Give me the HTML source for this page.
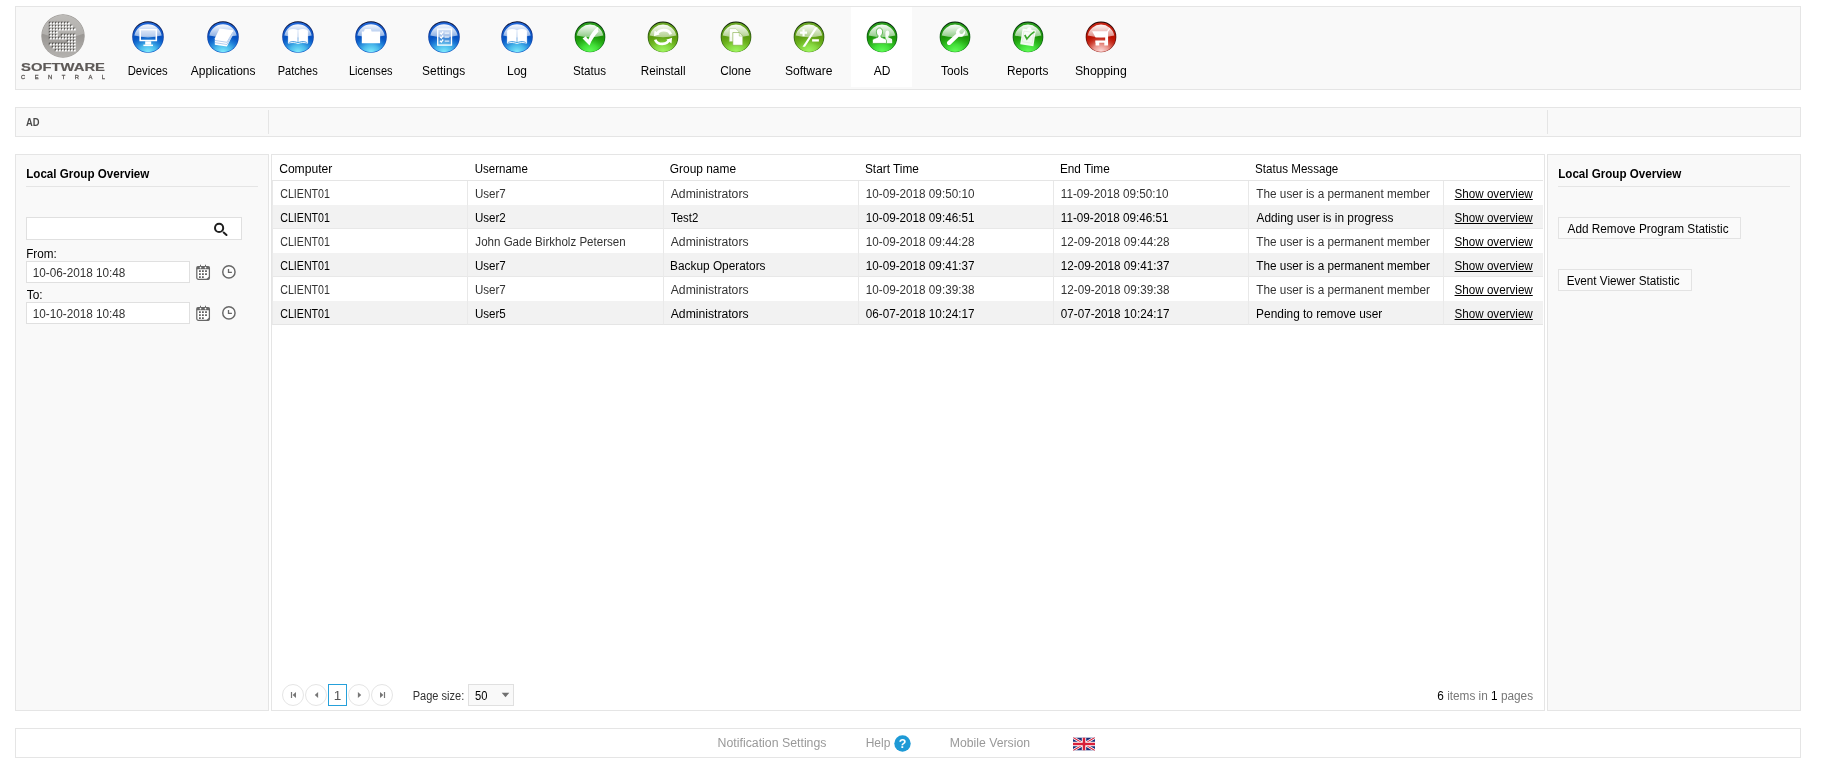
<!DOCTYPE html>
<html lang="en">
<head>
<meta charset="utf-8">
<title>SoftwareCentral - AD - Local Group Overview</title>
<style>
*{box-sizing:border-box;margin:0;padding:0}
html,body{width:1837px;height:779px;background:#fff;overflow:hidden}
body{will-change:transform;font-family:"Liberation Sans",Arial,sans-serif;font-size:12px;color:#000;position:relative}
.box{position:absolute;left:15px;width:1786px;border:1px solid #e5e5e5;background:#f9f9f9}
#hdr{top:6px;height:84px}
#crumb{top:107px;height:30px}
#foot{top:728px;height:30px;background:#fff}
.panel{position:absolute;top:154px;height:557px;width:254px;border:1px solid #e5e5e5;background:#f9f9f9}
#lp{left:15px}
#rp{left:1547px}
#grid{position:absolute;left:271px;top:154px;width:1274px;height:557px;border:1px solid #e5e5e5;background:#fff}
.abs{position:absolute;white-space:nowrap}
.fx{display:inline-block;transform-origin:0 50%;white-space:nowrap}
.h_comp{transform:translateX(0.13px) scaleX(1.0100)}
.h_user{transform:translateX(0.70px) scaleX(0.9590)}
.h_group{transform:translateX(-0.14px) scaleX(0.9917)}
.h_start{transform:translateX(-0.04px) scaleX(0.9849)}
.h_end{transform:translateX(-0.09px) scaleX(0.9835)}
.h_status{transform:translateX(0.08px) scaleX(0.9673)}
.c_client{transform:translateX(0.21px) scaleX(0.8875)}
.c_user{transform:translateX(-0.09px) scaleX(0.9649)}
.c_john{transform:translateX(0.36px) scaleX(0.9629)}
.c_admin{transform:translateX(-0.26px) scaleX(1.0144)}
.c_test2{transform:translateX(0.04px) scaleX(0.9516)}
.c_backup{transform:translateX(-0.91px) scaleX(0.9868)}
.c_date{transform:translateX(-0.23px) scaleX(0.9749)}
.c_perm{transform:translateX(0.34px) scaleX(0.9789)}
.c_adding{transform:translateX(0.49px) scaleX(0.9865)}
.c_pending{transform:translateX(0.12px) scaleX(0.9906)}
.c_show{transform:translateX(0.56px) scaleX(0.9690)}
#n_Devices{transform:translateX(1.66px) scaleX(0.9391)}
#n_Applications{transform:translateX(0.76px) scaleX(1.0004)}
#n_Patches{transform:translateX(1.71px) scaleX(0.9230)}
#n_Licenses{transform:translateX(1.96px) scaleX(0.9201)}
#n_Settings{transform:translateX(0.10px) scaleX(0.9933)}
#n_Log{transform:translateX(1.01px) scaleX(0.9969)}
#n_Status{transform:translateX(1.00px) scaleX(0.9686)}
#n_Reinstall{transform:translateX(1.71px) scaleX(0.9728)}
#n_Clone{transform:translateX(0.15px) scaleX(0.9837)}
#n_Software{transform:translateX(-0.09px) scaleX(1.0055)}
#n_AD{transform:translateX(0.83px) scaleX(1.0013)}
#n_Tools{transform:translateX(0.99px) scaleX(0.9897)}
#n_Reports{transform:translateX(0.88px) scaleX(0.9864)}
#n_Shopping{transform:translateX(-0.10px) scaleX(1.0220)}
#t_crumb{transform:translateX(-0.08px) scaleX(0.9375)}
.t_title{transform:translateX(0.23px) scaleX(0.9666)}
#t_from{transform:translateX(0.19px) scaleX(0.9738)}
#t_to{transform:translateX(0.82px) scaleX(0.9905)}
.t_dt{transform:translateX(-0.31px) scaleX(0.9784)}
#t_b1{transform:translateX(-0.39px) scaleX(0.9808)}
#t_b2{transform:translateX(-1.32px) scaleX(0.9754)}
#t_f1{transform:translateX(-0.39px) scaleX(1.0265)}
#t_f2{transform:translateX(-0.30px) scaleX(1.0000)}
#t_f3{transform:translateX(-0.24px) scaleX(1.0195)}
#t_pgsz{transform:translateX(-0.31px) scaleX(0.9197)}
#t_pginfo{transform:translateX(1.28px) scaleX(0.9828)}

/* nav */
.nav{position:absolute;top:0;height:80px;width:61px;text-align:center}
.nav.sel{background:#fff}
.nav svg{position:absolute;left:15px;top:14px;width:32px;height:32px}
.nav span b{font-weight:normal}
.nav span{position:absolute;left:-20px;right:-20px;top:57px;line-height:14px;font-size:12px;color:#000;text-align:center;white-space:nowrap}
/* panel */
.ptitle{position:absolute;left:10px;top:12px;font-weight:bold;font-size:12px;line-height:14px;white-space:nowrap}
.pline{position:absolute;left:10px;top:31px;width:232px;height:1px;background:#e5e5e5}
.inp{position:absolute;background:#fff;border:1px solid #e0e0e0;font-size:12px;color:#333;white-space:nowrap}
.btn{position:absolute;border:1px solid #e3e3e3;background:#fafafa;height:22px;line-height:22px;font-size:12px;padding:0 0 0 9px;white-space:nowrap;color:#000}
/* grid */
table{border-collapse:separate;border-spacing:0;table-layout:fixed;width:1271px;position:absolute;left:0;top:0}
th{height:26px;text-align:left;font-weight:normal;font-size:12px;padding:2px 0 0 7px;border-bottom:1px solid #e5e5e5;color:#000;white-space:nowrap}
td{height:24px;font-size:12px;padding:2px 0 0 7px;border-left:1px solid #e8e8e8;color:#333;white-space:nowrap;overflow:hidden}
tr.alt td{background:#f2f2f2;color:#000;border-left-color:#eaeaea;border-bottom:1px solid #e8e8e8}
tr.last td{border-bottom:1px solid #e5e5e5}
td a{color:#000;text-decoration:underline}
td.lnk{padding-left:10px}
.pg{position:absolute;top:529px;width:22px;height:22px;border:1px solid #e5e5e5;border-radius:11px;background:#fff}
.pg svg{position:absolute;left:0;top:0;width:20px;height:20px}
.fl{position:absolute;top:7px;line-height:14px;font-size:12px;color:#999;white-space:nowrap}
</style>
</head>
<body>
<svg width="0" height="0" style="position:absolute;left:0;top:0" aria-hidden="true">
<defs>
  <linearGradient id="gloss" x1="0" y1="0" x2="0" y2="1"><stop offset="0" stop-color="#fff" stop-opacity=".97"/><stop offset="1" stop-color="#fff" stop-opacity=".5"/></linearGradient>
  <!-- blue -->
  <linearGradient id="rB" x1="0" y1="0" x2="0" y2="1"><stop offset="0" stop-color="#050a2a"/><stop offset=".4" stop-color="#143a98"/><stop offset="1" stop-color="#1560cc"/></linearGradient>
  <linearGradient id="bB" x1="0" y1="0" x2="0" y2="1"><stop offset="0" stop-color="#2468d8"/><stop offset=".5" stop-color="#0652c2"/><stop offset=".7" stop-color="#0c62cc"/><stop offset="1" stop-color="#2a9ae4"/></linearGradient>
  <radialGradient id="gB" cx=".5" cy="1.02" r=".62"><stop offset="0" stop-color="#86f0ff"/><stop offset=".45" stop-color="#55c8f0" stop-opacity=".8"/><stop offset="1" stop-color="#2a90e0" stop-opacity="0"/></radialGradient>
  <!-- bright green -->
  <linearGradient id="rG" x1="0" y1="0" x2="0" y2="1"><stop offset="0" stop-color="#03200a"/><stop offset=".45" stop-color="#0c5a14"/><stop offset="1" stop-color="#147a18"/></linearGradient>
  <linearGradient id="bG" x1="0" y1="0" x2="0" y2="1"><stop offset="0" stop-color="#2ea022"/><stop offset=".5" stop-color="#1a9406"/><stop offset=".7" stop-color="#22a610"/><stop offset="1" stop-color="#38d430"/></linearGradient>
  <radialGradient id="gG" cx=".5" cy="1.02" r=".62"><stop offset="0" stop-color="#66ff5c"/><stop offset=".45" stop-color="#48e840" stop-opacity=".8"/><stop offset="1" stop-color="#2ab41e" stop-opacity="0"/></radialGradient>
  <!-- olive green -->
  <linearGradient id="rO" x1="0" y1="0" x2="0" y2="1"><stop offset="0" stop-color="#0c1c06"/><stop offset=".45" stop-color="#2c5a10"/><stop offset="1" stop-color="#3f7c14"/></linearGradient>
  <linearGradient id="bO" x1="0" y1="0" x2="0" y2="1"><stop offset="0" stop-color="#6aa828"/><stop offset=".5" stop-color="#5c9c10"/><stop offset=".72" stop-color="#68ac18"/><stop offset="1" stop-color="#88dc40"/></linearGradient>
  <radialGradient id="gO" cx=".5" cy="1.02" r=".62"><stop offset="0" stop-color="#a4f866"/><stop offset=".45" stop-color="#8ce048" stop-opacity=".8"/><stop offset="1" stop-color="#6cb020" stop-opacity="0"/></radialGradient>
  <!-- red -->
  <linearGradient id="rR" x1="0" y1="0" x2="0" y2="1"><stop offset="0" stop-color="#1c0403"/><stop offset=".45" stop-color="#5a0e0a"/><stop offset="1" stop-color="#8c2018"/></linearGradient>
  <linearGradient id="bR" x1="0" y1="0" x2="0" y2="1"><stop offset="0" stop-color="#c82818"/><stop offset=".5" stop-color="#bc1000"/><stop offset=".7" stop-color="#c22010"/><stop offset="1" stop-color="#d85a50"/></linearGradient>
  <radialGradient id="gR" cx=".5" cy="1.02" r=".62"><stop offset="0" stop-color="#ffe4e4"/><stop offset=".45" stop-color="#f0a8a0" stop-opacity=".8"/><stop offset="1" stop-color="#c83020" stop-opacity="0"/></radialGradient>
  <g id="ballB"><circle cx="16" cy="16" r="15.8" fill="url(#rB)"/><circle cx="16" cy="16.2" r="15" fill="url(#bB)"/><circle cx="16" cy="16.2" r="15" fill="url(#gB)"/><path d="M2.3 14.6A13.9 13.7 0 0 1 29.7 14.6Q16 18.200 2.300 14.600Z" fill="url(#gloss)"/></g>
  <g id="ballG"><circle cx="16" cy="16" r="15.8" fill="url(#rG)"/><circle cx="16" cy="16.2" r="15" fill="url(#bG)"/><circle cx="16" cy="16.2" r="15" fill="url(#gG)"/><path d="M2.3 14.6A13.9 13.7 0 0 1 29.7 14.6Q16 18.200 2.300 14.600Z" fill="url(#gloss)"/></g>
  <g id="ballO"><circle cx="16" cy="16" r="15.8" fill="url(#rO)"/><circle cx="16" cy="16.2" r="15" fill="url(#bO)"/><circle cx="16" cy="16.2" r="15" fill="url(#gO)"/><path d="M2.3 14.6A13.9 13.7 0 0 1 29.7 14.6Q16 18.200 2.300 14.600Z" fill="url(#gloss)"/></g>
  <g id="ballR"><circle cx="16" cy="16" r="15.8" fill="url(#rR)"/><circle cx="16" cy="16.2" r="15" fill="url(#bR)"/><circle cx="16" cy="16.2" r="15" fill="url(#gR)"/><path d="M2.3 14.6A13.9 13.7 0 0 1 29.7 14.6Q16 18.200 2.300 14.600Z" fill="url(#gloss)"/></g>
</defs>
</svg>

<div id="hdr" class="box">
<svg class="abs" style="left:0;top:0" width="110" height="82" viewBox="0 0 110 82">
<defs>
<linearGradient id="lgA" x1="0" y1="0" x2="0" y2="1"><stop offset="0" stop-color="#d6d5d3"/><stop offset=".25" stop-color="#bdbbb8"/><stop offset="1" stop-color="#aeaca9"/></linearGradient>
<linearGradient id="lgB" x1="0" y1="0" x2="0" y2="1"><stop offset="0" stop-color="#8e8b88"/><stop offset=".45" stop-color="#999693"/><stop offset="1" stop-color="#b4b2af"/></linearGradient>
<clipPath id="lgC"><circle cx="47" cy="29" r="21.2"/></clipPath>
</defs>
<circle cx="47" cy="29" r="21.700" fill="#a19e9b"/>
<circle cx="47" cy="29" r="21.200" fill="url(#lgB)"/>
<path clip-path="url(#lgC)" d="M20 0h54v24.600L47 33.500 20 24.600z" fill="url(#lgA)"/>
<path d="M32.85 14.65h2.5l-2.5 2.5zM35.85 14.65h2.5l-2.5 2.5zM38.85 14.65h2.5l-2.5 2.5zM41.85 14.65h2.5l-2.5 2.5zM44.85 14.65h2.5l-2.5 2.5zM47.85 14.65h2.5l-2.5 2.5zM50.85 14.65h2.5l-2.5 2.5zM32.85 17.65h2.5l-2.5 2.5zM35.85 17.65h2.5l-2.5 2.5zM38.85 17.65h2.5l-2.5 2.5zM41.85 17.65h2.5l-2.5 2.5zM44.85 17.65h2.5l-2.5 2.5zM47.85 17.65h2.5l-2.5 2.5zM50.85 17.65h2.5l-2.5 2.5zM53.85 17.65h2.5l-2.5 2.5zM32.85 20.65h2.5l-2.5 2.5zM35.85 20.65h2.5l-2.5 2.5zM38.85 20.65h2.5l-2.5 2.5zM41.85 20.65h2.5l-2.5 2.5zM44.85 20.65h2.5l-2.5 2.5zM47.85 20.65h2.5l-2.5 2.5zM50.85 20.65h2.5l-2.5 2.5zM53.85 20.65h2.5l-2.5 2.5zM56.85 20.65h2.5l-2.5 2.5zM32.85 23.65h2.5l-2.5 2.5zM35.85 23.65h2.5l-2.5 2.5zM38.85 23.65h2.5l-2.5 2.5zM32.85 26.65h2.5l-2.5 2.5zM35.85 26.65h2.5l-2.5 2.5zM38.85 26.65h2.5l-2.5 2.5zM44.85 26.65h2.5l-2.5 2.5zM47.85 26.65h2.5l-2.5 2.5zM50.85 26.65h2.5l-2.5 2.5zM53.85 26.65h2.5l-2.5 2.5zM56.85 26.65h2.5l-2.5 2.5zM32.85 29.65h2.5l-2.5 2.5zM35.85 29.65h2.5l-2.5 2.5zM38.85 29.65h2.5l-2.5 2.5zM41.85 29.65h2.5l-2.5 2.5zM44.85 29.65h2.5l-2.5 2.5zM47.85 29.65h2.5l-2.5 2.5zM50.85 29.65h2.5l-2.5 2.5zM53.85 29.65h2.5l-2.5 2.5zM56.85 29.65h2.5l-2.5 2.5zM50.85 32.65h2.5l-2.5 2.5zM53.85 32.65h2.5l-2.5 2.5zM56.85 32.65h2.5l-2.5 2.5zM32.85 35.65h2.5l-2.5 2.5zM35.85 35.65h2.5l-2.5 2.5zM38.85 35.65h2.5l-2.5 2.5zM41.85 35.65h2.5l-2.5 2.5zM44.85 35.65h2.5l-2.5 2.5zM47.85 35.65h2.5l-2.5 2.5zM50.85 35.65h2.5l-2.5 2.5zM53.85 35.65h2.5l-2.5 2.5zM56.85 35.65h2.5l-2.5 2.5zM35.85 38.65h2.5l-2.5 2.5zM38.85 38.65h2.5l-2.5 2.5zM41.85 38.65h2.5l-2.5 2.5zM44.85 38.65h2.5l-2.5 2.5zM47.85 38.65h2.5l-2.5 2.5zM50.85 38.65h2.5l-2.5 2.5zM53.85 38.65h2.5l-2.5 2.5zM56.85 38.65h2.5l-2.5 2.5zM38.85 41.65h2.5l-2.5 2.5zM41.85 41.65h2.5l-2.5 2.5zM44.85 41.65h2.5l-2.5 2.5zM47.85 41.65h2.5l-2.5 2.5zM50.85 41.65h2.5l-2.5 2.5zM53.85 41.65h2.5l-2.5 2.5zM56.85 41.65h2.5l-2.5 2.5z" fill="#1e1c1a" fill-opacity=".85"/>
<path d="M33.65 15.45h2.1v2.1h-2.1zM36.65 15.45h2.1v2.1h-2.1zM39.65 15.45h2.1v2.1h-2.1zM42.65 15.45h2.1v2.1h-2.1zM45.65 15.45h2.1v2.1h-2.1zM48.65 15.45h2.1v2.1h-2.1zM51.65 15.45h2.1v2.1h-2.1zM33.65 18.45h2.1v2.1h-2.1zM36.65 18.45h2.1v2.1h-2.1zM39.65 18.45h2.1v2.1h-2.1zM42.65 18.45h2.1v2.1h-2.1zM45.65 18.45h2.1v2.1h-2.1zM48.65 18.45h2.1v2.1h-2.1zM51.65 18.45h2.1v2.1h-2.1zM54.65 18.45h2.1v2.1h-2.1zM33.65 21.45h2.1v2.1h-2.1zM36.65 21.45h2.1v2.1h-2.1zM39.65 21.45h2.1v2.1h-2.1zM42.65 21.45h2.1v2.1h-2.1zM45.65 21.45h2.1v2.1h-2.1zM48.65 21.45h2.1v2.1h-2.1zM51.65 21.45h2.1v2.1h-2.1zM54.65 21.45h2.1v2.1h-2.1zM57.65 21.45h2.1v2.1h-2.1zM33.65 24.45h2.1v2.1h-2.1zM36.65 24.45h2.1v2.1h-2.1zM39.65 24.45h2.1v2.1h-2.1zM33.65 27.45h2.1v2.1h-2.1zM36.65 27.45h2.1v2.1h-2.1zM39.65 27.45h2.1v2.1h-2.1zM45.65 27.45h2.1v2.1h-2.1zM48.65 27.45h2.1v2.1h-2.1zM51.65 27.45h2.1v2.1h-2.1zM54.65 27.45h2.1v2.1h-2.1zM57.65 27.45h2.1v2.1h-2.1zM33.65 30.45h2.1v2.1h-2.1zM36.65 30.45h2.1v2.1h-2.1zM39.65 30.45h2.1v2.1h-2.1zM42.65 30.45h2.1v2.1h-2.1zM45.65 30.45h2.1v2.1h-2.1zM48.65 30.45h2.1v2.1h-2.1zM51.65 30.45h2.1v2.1h-2.1zM54.65 30.45h2.1v2.1h-2.1zM57.65 30.45h2.1v2.1h-2.1zM51.65 33.45h2.1v2.1h-2.1zM54.65 33.45h2.1v2.1h-2.1zM57.65 33.45h2.1v2.1h-2.1zM33.65 36.45h2.1v2.1h-2.1zM36.65 36.45h2.1v2.1h-2.1zM39.65 36.45h2.1v2.1h-2.1zM42.65 36.45h2.1v2.1h-2.1zM45.65 36.45h2.1v2.1h-2.1zM48.65 36.45h2.1v2.1h-2.1zM51.65 36.45h2.1v2.1h-2.1zM54.65 36.45h2.1v2.1h-2.1zM57.65 36.45h2.1v2.1h-2.1zM36.65 39.45h2.1v2.1h-2.1zM39.65 39.45h2.1v2.1h-2.1zM42.65 39.45h2.1v2.1h-2.1zM45.65 39.45h2.1v2.1h-2.1zM48.65 39.45h2.1v2.1h-2.1zM51.65 39.45h2.1v2.1h-2.1zM54.65 39.45h2.1v2.1h-2.1zM57.65 39.45h2.1v2.1h-2.1zM39.65 42.45h2.1v2.1h-2.1zM42.65 42.45h2.1v2.1h-2.1zM45.65 42.45h2.1v2.1h-2.1zM48.65 42.45h2.1v2.1h-2.1zM51.65 42.45h2.1v2.1h-2.1zM54.65 42.45h2.1v2.1h-2.1zM57.65 42.45h2.1v2.1h-2.1z" fill="#fff"/>
<text x="5" y="63.800" font-family="Liberation Sans,Arial,sans-serif" font-weight="bold" font-size="10.200" fill="#5e5a58" stroke="#5e5a58" stroke-width=".15" textLength="84" lengthAdjust="spacingAndGlyphs">SOFTWARE</text>
<text x="5" y="71.900" font-family="Liberation Sans,Arial,sans-serif" font-weight="normal" font-size="5.800" fill="#5e5a58" stroke="#5e5a58" stroke-width=".3" textLength="84" lengthAdjust="spacing" id="lgT2">CENTRAL</text>
</svg>

<div class="nav" style="left:101px"><svg viewBox="0 0 32 32"><use href="#ballB"/><path fill="#fff" fill-rule="evenodd" d="M7.4 8h17.7v12.3H7.4zM9 9.6v9.1h14.5V9.6z"/><path fill="#fff" d="M13.2 20.3h6v3.4h-6z"/><path fill="#fff" d="M11.4 23.6h9.6v1.5h-9.6z"/><path fill="#fff" fill-opacity=".35" d="M9 9.6h14.5v6H9z"/></svg><span><b class="fx" id="n_Devices">Devices</b></span></div>
<div class="nav" style="left:176px"><svg viewBox="0 0 32 32"><use href="#ballB"/><path fill="#fff" d="M12.700 7.400l13.400 1.900v4.300l-6.200 12-12.100-1.900v-6.500z"/><path fill="none" stroke="#7aa6e0" stroke-width=".55" d="M7.800 19.400l12.100 1.900 6.200-10.500M7.800 21.600l12.100 1.900 6.200-11.300"/></svg><span><b class="fx" id="n_Applications">Applications</b></span></div>
<div class="nav" style="left:251px"><svg viewBox="0 0 32 32"><use href="#ballB"/><path fill="#fff" d="M6.500 9C9.300 7.700 12.800 7.700 15.700 8.900v12.200c-2.900-1-6.300-1-9.200.1z"/><path fill="#fff" d="M25.500 9C22.700 7.700 19.200 7.700 16.300 8.900v12.200c2.900-1 6.300-1 9.200.1z"/><path fill="none" stroke="#fff" stroke-width=".9" d="M6.400 10v12.200c3.200-1 6.400-.9 9.600.3 3.200-1.200 6.400-1.300 9.600-.3V10"/></svg><span><b class="fx" id="n_Patches">Patches</b></span></div>
<div class="nav" style="left:324px"><svg viewBox="0 0 32 32"><use href="#ballB"/><path fill="#fff" d="M6.800 10.400h2.200l.8-2.400h6l.8 2.400h8.500v11.900H6.800z"/></svg><span><b class="fx" id="n_Licenses">Licenses</b></span></div>
<div class="nav" style="left:397px"><svg viewBox="0 0 32 32"><use href="#ballB"/><rect x="9.700" y="8.100" width="13.800" height="16" fill="#fff" fill-opacity=".18" stroke="#fff" stroke-width="1.3"/><g fill="none" stroke="#fff" stroke-width="1.300"><path d="M12 11.800l1.300 1.300 1.900-2.600M12 15.800l1.300 1.300 1.900-2.600M12 19.800l1.300 1.300 1.900-2.600"/></g><g fill="#fff" fill-opacity=".8"><path d="M16.700 11.400h4.600v1.400h-4.600zM16.700 15.400h4.600v1.400h-4.600zM16.700 19.400h4.600v1.400h-4.600z"/></g></svg><span><b class="fx" id="n_Settings">Settings</b></span></div>
<div class="nav" style="left:470px"><svg viewBox="0 0 32 32"><use href="#ballB"/><path fill="#fff" d="M6.500 9C9.300 7.700 12.800 7.700 15.700 8.900v12.200c-2.900-1-6.300-1-9.200.1z"/><path fill="#fff" d="M25.500 9C22.700 7.700 19.200 7.700 16.300 8.900v12.200c2.900-1 6.300-1 9.200.1z"/><path fill="none" stroke="#fff" stroke-width=".9" d="M6.400 10v12.200c3.200-1 6.400-.9 9.600.3 3.200-1.200 6.400-1.300 9.600-.3V10"/></svg><span><b class="fx" id="n_Log">Log</b></span></div>
<div class="nav" style="left:543px"><svg viewBox="0 0 32 32"><g transform="translate(.5 .4) scale(.969)"><use href="#ballG"/><path fill="#fff" d="M8.300 17.600l3.300-2.300 2.600 3.400c2.400-5.200 5.600-9.700 9.400-12.900l.9.500c-.7 1.500-.5 2.900.3 4.200-3.700 3.700-6.800 8.500-9.300 14.400z"/></g></svg><span><b class="fx" id="n_Status">Status</b></span></div>
<div class="nav" style="left:616px"><svg viewBox="0 0 32 32"><g transform="translate(.5 .4) scale(.969)"><use href="#ballO"/><g fill="none" stroke="#fff" stroke-width="2.800"><path d="M9.600 13.600A7.400 5.900 0 0 1 24 13.400"/><path d="M22.400 18.600A7.400 5.900 0 0 1 8 18.800"/></g><path fill="#fff" d="M6.600 15.300l.7-5.900 5.300 3.800z"/><path fill="#fff" d="M25.400 16.900l-.7 5.900-5.300-3.800z"/></g></svg><span><b class="fx" id="n_Reinstall">Reinstall</b></span></div>
<div class="nav" style="left:689px"><svg viewBox="0 0 32 32"><g transform="translate(.5 .4) scale(.969)"><use href="#ballO"/><path fill="#fff" fill-opacity=".93" stroke="#a8c880" stroke-width=".5" d="M9.100 7.400h6.600l3 3v10.400H9.100z"/><path fill="#fff" stroke="#7aa838" stroke-width=".6" d="M12.700 11.500h6.700l3.600 3.600v9.500H12.700z"/><path fill="none" stroke="#9cc468" stroke-width=".6" d="M19.400 11.500v3.600h3.600"/></g></svg><span><b class="fx" id="n_Clone">Clone</b></span></div>
<div class="nav" style="left:762px"><svg viewBox="0 0 32 32"><g transform="translate(.5 .4) scale(.969)"><use href="#ballO"/><path fill="#fff" d="M9.300 8h2.200v2.500H14v2.200h-2.500v2.500H9.300v-2.500H6.800v-2.200h2.500z"/><path fill="#fff" d="M22.300 6.300h2.600L11.900 26.200H9.300z"/><path fill="#fff" d="M19.200 18.400h7v2.400h-7z"/></g></svg><span><b class="fx" id="n_Software">Software</b></span></div>
<div class="nav sel" style="left:835px"><svg viewBox="0 0 32 32"><g transform="translate(.5 .4) scale(.969)"><use href="#ballG"/><path fill="#fff" fill-opacity=".92" d="M21.400 9.400c1.400 0 2.200 1.200 2.200 2.800 0 1.400-.5 2.400-1.200 3v1.100l3.400 1.500c.5.300.7.700.7 1.300v3.400h-7v-10.600c.2-1.500.9-2.500 1.900-2.500z"/><path fill="#fff" stroke="#2ea41e" stroke-width=".7" d="M13.400 6.800c2 0 3.200 1.600 3.200 3.900 0 1.800-.7 3.200-1.700 4v1.500l4.700 2c.7.300 1 .9 1 1.600v2.900H6.200v-2.900c0-.7.300-1.300 1-1.600l4.700-2v-1.500c-1-.8-1.700-2.200-1.700-4 0-2.300 1.200-3.900 3.200-3.900z"/></g></svg><span><b class="fx" id="n_AD">AD</b></span></div>
<div class="nav" style="left:908px"><svg viewBox="0 0 32 32"><g transform="translate(.5 .4) scale(.969)"><use href="#ballG"/><path fill="#fff" d="M17.700 9.300c1.300-2.200 3.600-3 5.600-2.500l-2.900 3.300.6 2.400 2.400.5 2.800-3.300c.8 2-.1 4.400-2.100 5.600-1.300.8-2.800.8-4 .3l-8.600 8.200c-.9.900-2.300.9-3.200 0-.9-.9-.8-2.300.1-3.200l8.900-7.900c-.4-1.100-.3-2.300.4-3.400z"/></g></svg><span><b class="fx" id="n_Tools">Tools</b></span></div>
<div class="nav" style="left:981px"><svg viewBox="0 0 32 32"><g transform="translate(.5 .4) scale(.969)"><use href="#ballG"/><g transform="rotate(9 16 16)"><path fill="#fff" fill-opacity=".93" d="M9.200 8.300h4.600c0-1.500 1-2.500 2.300-2.500s2.300 1 2.300 2.500H23v16.400H9.200z"/><path fill="none" stroke="#dfe9da" stroke-width=".7" d="M11 10.700h10.200v11.200H11z"/><path fill="none" stroke="#3aa82a" stroke-width="1.700" d="M12.400 14.600l2.800 3.600c1.600-3.400 3.600-6 6.600-8.600"/></g></g></svg><span><b class="fx" id="n_Reports">Reports</b></span></div>
<div class="nav" style="left:1054px"><svg viewBox="0 0 32 32"><g transform="translate(.5 .4) scale(.969)"><use href="#ballR"/><path fill="#fff" d="M6.800 10.200h15.400l2.400-3.400 1 .6-2.300 3.400v14h-3.900v-2.700h-5.200v2.700h-3.800v-2.700h-.3v-2.300h10.200v-3.300H10.400z"/></g></svg><span><b class="fx" id="n_Shopping">Shopping</b></span></div>

</div>

<div id="crumb" class="box">
  <div class="abs" style="left:10px;top:9px;font-size:10px;font-weight:bold;color:#4a4a4a;line-height:12px"><span class="fx" id="t_crumb">AD</span></div>
  <div class="abs" style="left:252px;top:2px;width:1px;height:24px;background:#e5e5e5"></div>
  <div class="abs" style="left:1531px;top:2px;width:1px;height:24px;background:#e5e5e5"></div>
</div>

<div id="lp" class="panel">
  <div class="ptitle"><span class="fx t_title">Local Group Overview</span></div>
  <div class="pline"></div>
  <div class="inp" style="left:10px;top:62px;width:216px;height:23px"></div>
  <div class="abs" style="left:10px;top:92px;line-height:14px;color:#000"><span class="fx" id="t_from">From:</span></div>
  <div class="inp" style="left:10px;top:106px;width:164px;height:22px;line-height:22px;padding-left:6px"><span class="fx t_dt">10-06-2018 10:48</span></div>
  <div class="abs" style="left:10px;top:133px;line-height:14px;color:#000"><span class="fx" id="t_to">To:</span></div>
  <div class="inp" style="left:10px;top:147px;width:164px;height:22px;line-height:22px;padding-left:6px"><span class="fx t_dt">10-10-2018 10:48</span></div>
  <svg class="abs" style="left:196px;top:66px" width="17" height="17" viewBox="0 0 17 17"><circle cx="7.100" cy="6.900" r="4.100" fill="none" stroke="#1e1e1e" stroke-width="2"/><path d="M11.700 11.500l2.800 2.500" stroke="#1e1e1e" stroke-width="2" stroke-linecap="round"/></svg>
  <svg class="abs" style="left:179px;top:109px" width="16" height="17" viewBox="0 0 16 17"><rect x="1.800" y="2.500" width="12.600" height="12.900" rx="1.600" fill="#fff" stroke="#676767" stroke-width="1.250"/><path fill="#676767" d="M1.800 2.500h12.600v2.700H1.800zM5 .800h1v1.900H5zM10 .800h1v1.900h-1zM14.400 12.200v2.600l-1 .900h-2.800z"/><circle cx="5.500" cy="3.600" r=".850" fill="#fff"/><circle cx="10.500" cy="3.600" r=".850" fill="#fff"/><path fill="#5e5e5e" d="M4 6.200h1.800V8H4zM7 6.200h1.800V8H7zM10.100 6.200h1.800V8h-1.800zM4 9.200h1.800V11H4zM7 9.200h1.800V11H7zM10.100 9.200h1.800V11h-1.800zM4 12.200h1.800V14H4zM7 12.200h1.800V14H7z"/></svg>
  <svg class="abs" style="left:205px;top:109px" width="16" height="16" viewBox="0 0 16 16"><circle cx="7.900" cy="7.900" r="6.150" fill="#fdfdfd" stroke="#676767" stroke-width="1.450"/><path fill="none" stroke="#676767" stroke-width="1.300" d="M7.500 5.100v3.300h3.400"/></svg>
  <svg class="abs" style="left:179px;top:150px" width="16" height="17" viewBox="0 0 16 17"><rect x="1.800" y="2.500" width="12.600" height="12.900" rx="1.600" fill="#fff" stroke="#676767" stroke-width="1.250"/><path fill="#676767" d="M1.800 2.500h12.600v2.700H1.800zM5 .800h1v1.900H5zM10 .800h1v1.900h-1zM14.400 12.200v2.600l-1 .900h-2.800z"/><circle cx="5.500" cy="3.600" r=".850" fill="#fff"/><circle cx="10.500" cy="3.600" r=".850" fill="#fff"/><path fill="#5e5e5e" d="M4 6.200h1.800V8H4zM7 6.200h1.800V8H7zM10.100 6.200h1.800V8h-1.800zM4 9.200h1.800V11H4zM7 9.200h1.800V11H7zM10.100 9.200h1.800V11h-1.800zM4 12.200h1.800V14H4zM7 12.200h1.800V14H7z"/></svg>
  <svg class="abs" style="left:205px;top:150px" width="16" height="16" viewBox="0 0 16 16"><circle cx="7.900" cy="7.900" r="6.150" fill="#fdfdfd" stroke="#676767" stroke-width="1.450"/><path fill="none" stroke="#676767" stroke-width="1.300" d="M7.500 5.100v3.300h3.400"/></svg>

</div>

<div id="grid">
<table>
<colgroup><col style="width:195px"><col style="width:196px"><col style="width:195px"><col style="width:195px"><col style="width:195px"><col style="width:195px"><col style="width:100px"></colgroup>
<tr><th><span class="fx h_comp">Computer</span></th><th><span class="fx h_user">Username</span></th><th><span class="fx h_group">Group name</span></th><th><span class="fx h_start">Start Time</span></th><th><span class="fx h_end">End Time</span></th><th colspan=2><span class="fx h_status">Status Message</span></th></tr>
<tr><td><span class="fx c_client">CLIENT01</span></td><td><span class="fx c_user">User7</span></td><td><span class="fx c_admin">Administrators</span></td><td><span class="fx c_date">10-09-2018 09:50:10</span></td><td><span class="fx c_date">11-09-2018 09:50:10</span></td><td><span class="fx c_perm">The user is a permanent member</span></td><td class="lnk"><a class="fx c_show">Show overview</a></td></tr>
<tr class="alt"><td><span class="fx c_client">CLIENT01</span></td><td><span class="fx c_user">User2</span></td><td><span class="fx c_test2">Test2</span></td><td><span class="fx c_date">10-09-2018 09:46:51</span></td><td><span class="fx c_date">11-09-2018 09:46:51</span></td><td><span class="fx c_adding">Adding user is in progress</span></td><td class="lnk"><a class="fx c_show">Show overview</a></td></tr>
<tr><td><span class="fx c_client">CLIENT01</span></td><td><span class="fx c_john">John Gade Birkholz Petersen</span></td><td><span class="fx c_admin">Administrators</span></td><td><span class="fx c_date">10-09-2018 09:44:28</span></td><td><span class="fx c_date">12-09-2018 09:44:28</span></td><td><span class="fx c_perm">The user is a permanent member</span></td><td class="lnk"><a class="fx c_show">Show overview</a></td></tr>
<tr class="alt"><td><span class="fx c_client">CLIENT01</span></td><td><span class="fx c_user">User7</span></td><td><span class="fx c_backup">Backup Operators</span></td><td><span class="fx c_date">10-09-2018 09:41:37</span></td><td><span class="fx c_date">12-09-2018 09:41:37</span></td><td><span class="fx c_perm">The user is a permanent member</span></td><td class="lnk"><a class="fx c_show">Show overview</a></td></tr>
<tr><td><span class="fx c_client">CLIENT01</span></td><td><span class="fx c_user">User7</span></td><td><span class="fx c_admin">Administrators</span></td><td><span class="fx c_date">10-09-2018 09:39:38</span></td><td><span class="fx c_date">12-09-2018 09:39:38</span></td><td><span class="fx c_perm">The user is a permanent member</span></td><td class="lnk"><a class="fx c_show">Show overview</a></td></tr>
<tr class="alt last"><td><span class="fx c_client">CLIENT01</span></td><td><span class="fx c_user">User5</span></td><td><span class="fx c_admin">Administrators</span></td><td><span class="fx c_date">06-07-2018 10:24:17</span></td><td><span class="fx c_date">07-07-2018 10:24:17</span></td><td><span class="fx c_pending">Pending to remove user</span></td><td class="lnk"><a class="fx c_show">Show overview</a></td></tr>
</table>
<div class="pg" style="left:10px"><svg viewBox="0 0 20 20"><path fill="#777" d="M7.900 7h1.200v6H7.900zM9.600 10l3.400-3v6z"/></svg></div>
<div class="pg" style="left:33px"><svg viewBox="0 0 20 20"><path fill="#777" d="M8.800 10l3.300-3v6z"/></svg></div>
<div class="abs" style="left:56px;top:529px;width:19px;height:22px;border:1px solid #25a0da;background:#fff;text-align:center;line-height:22px;font-size:13.5px;color:#555">1</div>
<div class="pg" style="left:76px"><svg viewBox="0 0 20 20"><path fill="#777" d="M12.200 10L8.900 7v6z"/></svg></div>
<div class="pg" style="left:99px"><svg viewBox="0 0 20 20"><path fill="#777" d="M11.400 10L8 7v6zM11.900 7h1.200v6h-1.200z"/></svg></div>
<div class="abs" id="pgsz" style="left:141px;top:534px;line-height:14px;color:#333"><span class="fx" id="t_pgsz">Page size:</span></div>
<div class="abs" style="left:196px;top:529px;width:46px;height:22px;border:1px solid #e0e0e0;background:#f9f9f9;line-height:22px;padding-left:6px;color:#000"><span class="fx" style="transform:scaleX(.93)">50</span><svg class="abs" style="left:32px;top:7px" width="9" height="6" viewBox="0 0 9 6"><path fill="#707070" d="M.700 .800h7.600L4.500 5.200z"/></svg></div>
<div class="abs" style="left:1164px;top:534px;line-height:14px;color:#777"><span class="fx" id="t_pginfo"><span style="color:#000">6</span> items in <span style="color:#000">1</span> pages</span></div>

</div>

<div id="rp" class="panel">
  <div class="ptitle"><span class="fx t_title">Local Group Overview</span></div>
  <div class="pline"></div>
  <div class="btn" style="left:10px;top:62px;width:183px"><span class="fx" id="t_b1">Add Remove Program Statistic</span></div>
  <div class="btn" style="left:10px;top:114px;width:134px"><span class="fx" id="t_b2">Event Viewer Statistic</span></div>
</div>

<div id="foot" class="box">
  <div class="fl" style="left:702px"><span class="fx" id="t_f1">Notification Settings</span></div>
  <div class="fl" style="left:850px"><span class="fx" id="t_f2">Help</span></div>
  <div class="fl" style="left:934px"><span class="fx" id="t_f3">Mobile Version</span></div>
  <svg class="abs" style="left:877.5px;top:6px" width="17" height="17" viewBox="0 0 17 17"><circle cx="8.500" cy="8.500" r="8.200" fill="#1e9ad6"/><text x="8.500" y="13" text-anchor="middle" font-family="Liberation Sans,Arial,sans-serif" font-weight="bold" font-size="12.500" fill="#fff">?</text></svg>
  <svg class="abs" style="left:1057px;top:8px" width="22" height="14" viewBox="0 0 60 36"><clipPath id="ukc"><rect width="60" height="36"/></clipPath><g clip-path="url(#ukc)"><rect width="60" height="36" fill="#1b2f7a"/><path d="M0 0l60 36M60 0L0 36" stroke="#fff" stroke-width="7"/><path d="M0 0l60 36M60 0L0 36" stroke="#d8203a" stroke-width="3"/><path d="M30 0v36M0 18h60" stroke="#fff" stroke-width="12"/><path d="M30 0v36M0 18h60" stroke="#d8203a" stroke-width="7"/></g></svg>

</div>

</body>
</html>
